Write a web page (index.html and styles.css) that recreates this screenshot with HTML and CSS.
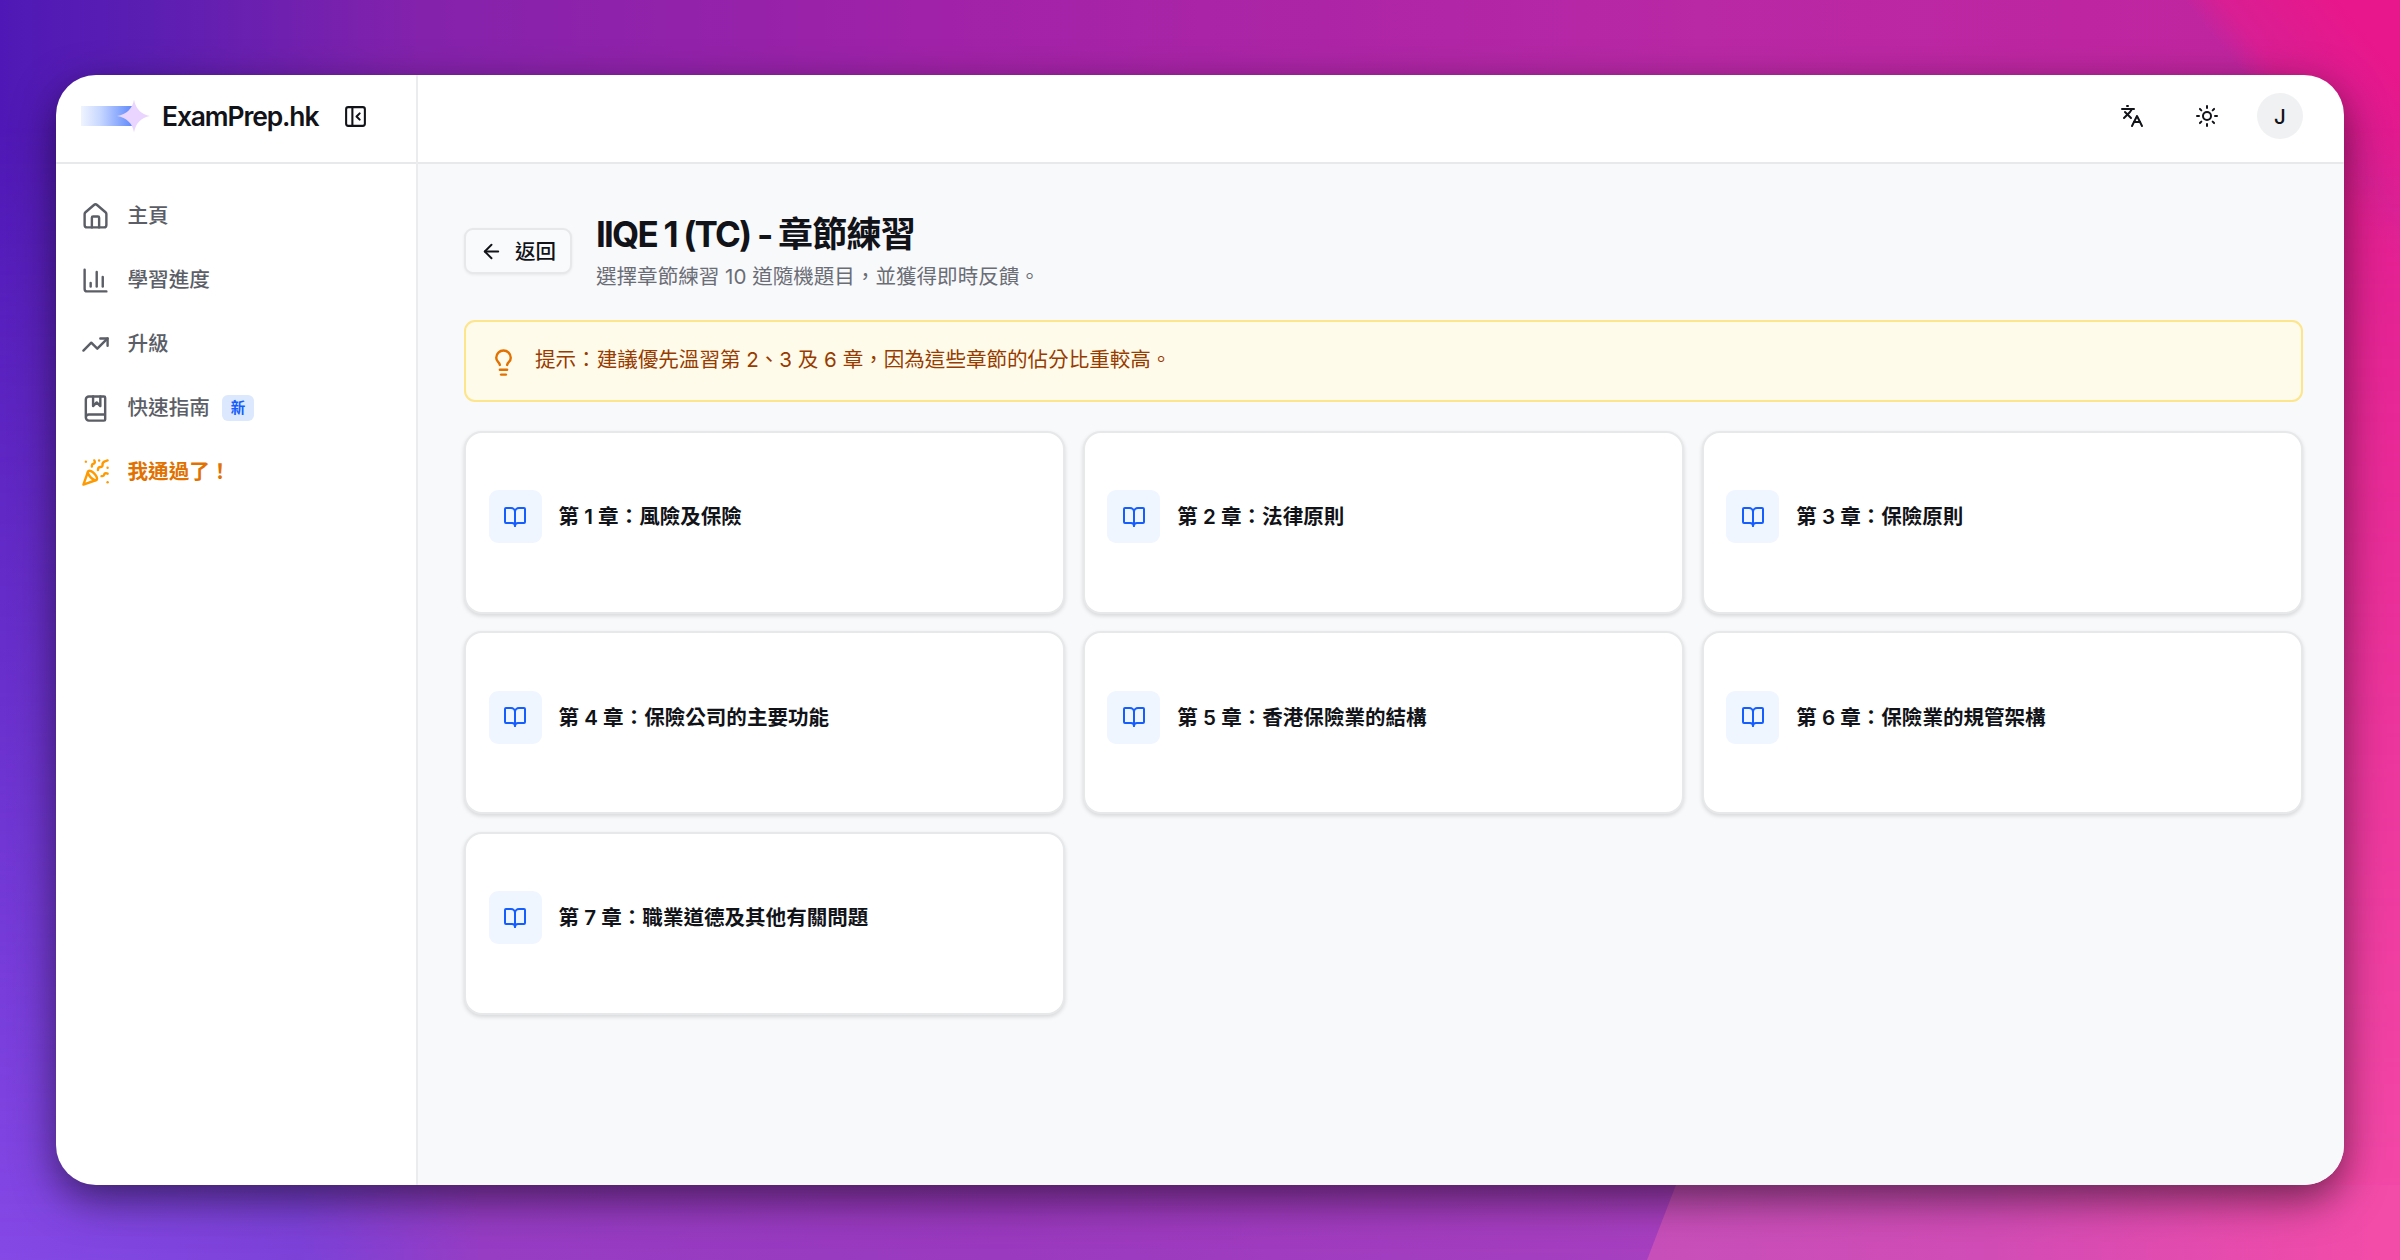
FILE: index.html
```html
<!DOCTYPE html>
<html lang="zh-Hant"><head><meta charset="utf-8"><title>ExamPrep.hk</title><link rel="stylesheet" href="styles.css"></head>
<body>
<svg width="0" height="0" class="defs"><defs>
<symbol id="book" viewBox="0 0 24 24"><path d="M12 7v14"/><path d="M3 18a1 1 0 0 1-1-1V4a1 1 0 0 1 1-1h5a4 4 0 0 1 4 4 4 4 0 0 1 4-4h5a1 1 0 0 1 1 1v13a1 1 0 0 1-1 1h-6a3 3 0 0 0-3 3 3 3 0 0 0-3-3z"/></symbol>
</defs></svg>
<div class="backdrop">
<div class="window">
<aside class="sidebar">
<div class="brand">
<svg class="logo" viewBox="0 0 70 34"><defs><linearGradient id="tail"><stop offset="0" stop-color="#eff4ff"/><stop offset=".35" stop-color="#c9d8ff"/><stop offset="1" stop-color="#5b86fb"/></linearGradient></defs><rect y="7" width="53" height="20" fill="url(#tail)"/><path d="M53 .5Q55.500 14.500 69 17Q55.500 19.500 53 33.500Q50.500 19.500 36 17Q50.500 14.500 53 .5Z" fill="#e9d5ff"/></svg>
<span class="brand-name">ExamPrep.hk</span>
<svg class="icon toggle" viewBox="0 0 24 24"><rect width="18" height="18" x="3" y="3" rx="2"/><path d="M9 3v18"/><path d="m16 15-3-3 3-3"/></svg>
</div>
<nav class="nav">
<a class="item"><svg class="icon" viewBox="0 0 24 24"><path d="M15 21v-8a1 1 0 0 0-1-1h-4a1 1 0 0 0-1 1v8"/><path d="M3 10a2 2 0 0 1 .709-1.528l7-5.999a2 2 0 0 1 2.582 0l7 5.999A2 2 0 0 1 21 10v9a2 2 0 0 1-2 2H5a2 2 0 0 1-2-2z"/></svg><span>主頁</span></a>
<a class="item"><svg class="icon" viewBox="0 0 24 24"><path d="M3 3v16a2 2 0 0 0 2 2h16"/><path d="M18 17V9"/><path d="M13 17V5"/><path d="M8 17v-3"/></svg><span>學習進度</span></a>
<a class="item"><svg class="icon" viewBox="0 0 24 24"><path d="M22 7 13.500 15.500 8.500 10.500 2 17"/><path d="M16 7h6v6"/></svg><span>升級</span></a>
<a class="item"><svg class="icon" viewBox="0 0 24 24"><path d="M10 2v8l3-3 3 3V2"/><path d="M4 19.500v-15A2.500 2.500 0 0 1 6.500 2H19a1 1 0 0 1 1 1v18a1 1 0 0 1-1 1H6.500a1 1 0 0 1 0-5H20"/></svg><span>快速指南</span><span class="badge">新</span></a>
<a class="item passed"><svg class="icon" viewBox="0 0 24 24"><path d="M5.800 11.300 2 22l10.700-3.790"/><path d="M4 3h.01"/><path d="M22 8h.01"/><path d="M15 2h.01"/><path d="M22 20h.01"/><path d="m22 2-2.240.75a2.900 2.900 0 0 0-1.960 3.120c.1.860-.57 1.630-1.450 1.630h-.38c-.86 0-1.600.6-1.760 1.440L14 10"/><path d="m22 13-.82-.33c-.86-.34-1.820.2-1.980 1.110c-.11.7-.72 1.220-1.430 1.220H17"/><path d="m11 2 .33.820c.34.860-.2 1.820-1.110 1.980C9.520 4.900 9 5.520 9 6.230V7"/><path d="M11 13c1.930 1.930 2.830 4.170 2 5-.83.830-3.070-.07-5-2-1.930-1.930-2.830-4.170-2-5 .83-.83 3.070.07 5 2Z"/></svg><span>我通過了！</span></a>
</nav>
</aside>
<div class="page">
<header class="topbar">
<svg class="icon" viewBox="0 0 24 24"><path d="m5 8 6 6"/><path d="m4 14 6-6 2-3"/><path d="M2 5h12"/><path d="M7 2h1"/><path d="m22 22-5-10-5 10"/><path d="M14 18h6"/></svg>
<svg class="icon" viewBox="0 0 24 24"><circle cx="12" cy="12" r="4"/><path d="M12 2v2"/><path d="M12 20v2"/><path d="m4.930 4.930 1.410 1.410"/><path d="m17.660 17.660 1.410 1.410"/><path d="M2 12h2"/><path d="M20 12h2"/><path d="m6.340 17.660-1.410 1.410"/><path d="m19.070 4.930-1.410 1.410"/></svg>
<span class="avatar">J</span>
</header>
<main class="content">
<div class="heading">
<button class="back"><svg class="icon" viewBox="0 0 24 24"><path d="m12 19-7-7 7-7"/><path d="M19 12H5"/></svg><span>返回</span></button>
<div class="titles"><h1><span class="latin">IIQE 1 (TC) - </span>章節練習</h1><p>選擇章節練習 10 道隨機題目，並獲得即時反饋。</p></div>
</div>
<div class="tip"><svg class="icon" viewBox="0 0 24 24"><path d="M15 14c.2-1 .7-1.700 1.500-2.500 1-.9 1.500-2.200 1.500-3.500A6 6 0 0 0 6 8c0 1 .2 2.200 1.500 3.500.7.7 1.300 1.500 1.500 2.500"/><path d="M9 18h6"/><path d="M10 22h4"/></svg><p>提示：建議優先溫習第 2、3 及 6 章，因為這些章節的佔分比重較高。</p></div>
<div class="grid">
<div class="card"><span class="tile"><svg class="icon"><use href="#book"/></svg></span><h2>第 1 章：風險及保險</h2></div>
<div class="card"><span class="tile"><svg class="icon"><use href="#book"/></svg></span><h2>第 2 章：法律原則</h2></div>
<div class="card"><span class="tile"><svg class="icon"><use href="#book"/></svg></span><h2>第 3 章：保險原則</h2></div>
<div class="card"><span class="tile"><svg class="icon"><use href="#book"/></svg></span><h2>第 4 章：保險公司的主要功能</h2></div>
<div class="card"><span class="tile"><svg class="icon"><use href="#book"/></svg></span><h2>第 5 章：香港保險業的結構</h2></div>
<div class="card"><span class="tile"><svg class="icon"><use href="#book"/></svg></span><h2>第 6 章：保險業的規管架構</h2></div>
<div class="card"><span class="tile"><svg class="icon"><use href="#book"/></svg></span><h2>第 7 章：職業道德及其他有關問題</h2></div>
</div>
</main>
</div>
</div>
</div>
</body></html>
```

FILE: styles.css
```css
*{box-sizing:border-box}
body,h1,h2,p{margin:0}
body{font-family:Inter,"Noto Sans CJK TC",sans-serif;color:#111318;font-size:20.5px;line-height:29.300px}
.defs{display:block;height:0}
.icon{fill:none;stroke:currentColor;stroke-width:2;stroke-linecap:round;stroke-linejoin:round;flex:none;display:block}
.backdrop{position:relative;isolation:isolate;width:2400px;height:1260px;padding:75px 56px;overflow:hidden;background:
 linear-gradient(51deg,transparent 2490px,#d91e93 2520px,#e8178b 2610px),
 linear-gradient(90deg,#4f18b6 0,#5b1eb2 150px,#8422ac 420px,#a122a8 950px,#b928a5 1700px,#c0259f 2240px,#e31c90 2350px)}
/* lighter tones that fade in towards the bottom */
.backdrop::before{content:"";position:absolute;inset:0;z-index:-1;
 background:linear-gradient(90deg,#8549e6 0,#7c42d8 300px,#963dc4 480px,#9a3abf 1000px,#a63fc0 1660px,#d64bb4 2000px,#f44ba8 2350px);
 -webkit-mask-image:linear-gradient(180deg,transparent 10%,#000);mask-image:linear-gradient(180deg,transparent 10%,#000)}
/* bright facet in the lower right */
.backdrop::after{content:"";position:absolute;inset:0;z-index:-1;clip-path:polygon(1676px 1185px,2400px 1185px,2400px 1260px,1647px 1260px);
 background:linear-gradient(90deg,#c74fba 1650px,#d14cb6 1980px,#f34ba8 2380px)}
.window{display:flex;width:2288px;height:1110px;border-radius:40px;overflow:hidden;background:#fff;box-shadow:0 14px 42px #0008}
.sidebar{width:362px;border-right:2px solid #ebecee;flex:none}
.brand{height:89px;border-bottom:2px solid #e8e9eb;display:flex;align-items:center;padding:0 0 5px 25px}
.logo{width:70px;height:34px}
.brand-name{margin:1px 0 0 11px;font-size:26.400px;font-weight:600;letter-spacing:-1.1px}
.toggle{width:25px;height:25px;margin-left:24.500px}
.nav{padding:20px 25px;color:#5b5e66;font-weight:500}
.item{height:64px;display:flex;align-items:center;font-size:20.600px}
.item .icon{width:29px;height:29px;margin-right:17.500px}
.badge{margin-left:12px;width:32px;height:26px;border-radius:6px;background:#dbe8fe;color:#155dfc;font-size:14.500px;font-weight:700;line-height:25px;text-align:center}
.passed{color:#e17100;font-weight:700}
.passed .icon{color:#fe9a00}
.page{flex:1;display:flex;flex-direction:column}
.topbar{height:89px;border-bottom:2px solid #e8e9eb;display:flex;align-items:center;justify-content:flex-end;padding:0 41px 5px 0}
.topbar .icon{width:24px;height:24px;margin-right:51px}
.topbar .icon+.icon{margin-right:38px}
.avatar{width:46px;height:46px;border-radius:50%;background:#f0f1f3;text-align:center;line-height:47px;font-weight:500}
.content{flex:1;background:#f8f9fb;padding:47px 41px 0 46px}
.heading{display:flex;align-items:center;gap:24px;height:80px}
.back{display:flex;align-items:center;width:108px;height:46px;padding:0 0 0 14px;gap:12px;border:2px solid #e7e8ea;border-radius:9px;background:#f9fafb;box-shadow:0 1px 3px #0001;font:500 20.500px Inter,"Noto Sans CJK TC",sans-serif;color:#111318;white-space:nowrap}
.back .icon{width:23px;height:23px}
.back span{margin-top:-2px}
h1{font-size:35px;line-height:44px;font-weight:700;letter-spacing:-.8px;white-space:pre}
.latin{letter-spacing:-1.8px}
.titles p{color:#6a6d75;line-height:29px;margin-top:6px;font-size:20.550px}
.tip{margin-top:29px;height:82px;border:2px solid #fce58b;border-radius:11px;background:#fffbeb;display:flex;padding:23px 0 0 23px;color:#973c00;font-size:20.550px}
.tip .icon{width:29px;height:29px;color:#e17100;margin:3px 17px 0 0}
.grid{display:grid;grid-template-columns:repeat(3,1fr);gap:17.500px;margin-top:28.500px}
.card{height:183px;border:2px solid #e7e8ea;border-radius:18px;background:#fff;box-shadow:0 2px 4px #0002;display:flex;align-items:center;padding:0 0 11px 22.500px;gap:17px}
.tile{width:53px;height:53px;border-radius:9px;background:#eff6ff;color:#155dfc;display:grid;place-items:center}
.tile .icon{width:24px;height:24px}
h2{font-size:20.550px;line-height:29px;font-weight:600}
```
